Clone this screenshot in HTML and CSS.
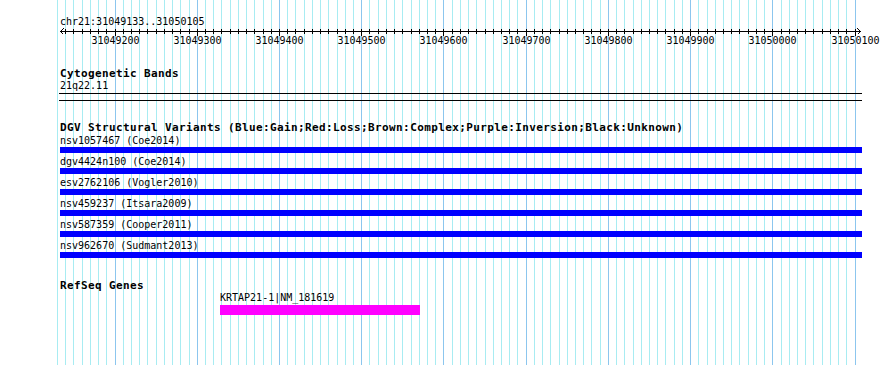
FILE: index.html
```html
<!DOCTYPE html>
<html lang="en">

<head>
    <meta charset="UTF-8">
    <meta name="viewport" content="width=device-width, initial-scale=1.0">
    <title>chr21:31049133..31050105</title>
    <link rel="stylesheet" href="styles.css">
</head>

<body>
    <div id="panel">
        <svg id="grid" width="890" height="365"></svg>
        <div class="label seg-name">chr21:31049133..31050105</div>
        <svg id="ruler" width="890" height="20"></svg>

        <div class="track cyto">
            <div class="track-title">Cytogenetic Bands</div>
            <div class="label">21q22.11</div>
            <div class="band"></div>
        </div>

        <div class="track dgv">
            <div class="track-title">DGV Structural Variants (Blue:Gain;Red:Loss;Brown:Complex;Purple:Inversion;Black:Unknown)</div>
            <div class="feature">
                <div class="label">nsv1057467 (Coe2014)</div>
                <div class="bar gain"></div>
            </div>
            <div class="feature">
                <div class="label">dgv4424n100 (Coe2014)</div>
                <div class="bar gain"></div>
            </div>
            <div class="feature">
                <div class="label">esv2762106 (Vogler2010)</div>
                <div class="bar gain"></div>
            </div>
            <div class="feature">
                <div class="label">nsv459237 (Itsara2009)</div>
                <div class="bar gain"></div>
            </div>
            <div class="feature">
                <div class="label">nsv587359 (Cooper2011)</div>
                <div class="bar gain"></div>
            </div>
            <div class="feature">
                <div class="label">nsv962670 (Sudmant2013)</div>
                <div class="bar gain"></div>
            </div>
        </div>

        <div class="track refseq">
            <div class="track-title">RefSeq Genes</div>
            <div class="feature gene">
                <div class="label">KRTAP21-1|NM_181619</div>
                <div class="bar transcript"></div>
            </div>
        </div>
    </div>
    <script>
        const segStart = 31049133;
        const segEnd = 31050105;
        const padLeft = 60;
        const trackWidth = 800;
        const scale = trackWidth / (segEnd - segStart + 1);
        const NS = 'http://www.w3.org/2000/svg';

        function xpos(bp) {
            return Math.floor(padLeft + (bp - segStart) * scale);
        }

        function addLine(svg, x1, y1, x2, y2, cls) {
            const el = document.createElementNS(NS, 'line');
            el.setAttribute('x1', x1);
            el.setAttribute('y1', y1);
            el.setAttribute('x2', x2);
            el.setAttribute('y2', y2);
            if (cls) el.setAttribute('class', cls);
            svg.appendChild(el);
        }

        // grid lines every 10bp, darker every 100bp
        const grid = document.getElementById('grid');
        for (let bp = 31049130; bp <= segEnd; bp += 10) {
            const x = xpos(bp) + 0.5;
            addLine(grid, x, 0, x, 365, bp % 100 === 0 ? 'major' : '');
        }

        // ruler: axis, arrows, ticks and labels
        const ruler = document.getElementById('ruler');
        addLine(ruler, padLeft, 3.5, padLeft + trackWidth + 1, 3.5);
        const arrows = ['63.5,0.5 60.5,3.5 63.5,6.5', '857.5,0.5 860.5,3.5 857.5,6.5'];
        arrows.forEach(pts => {
            const p = document.createElementNS(NS, 'polyline');
            p.setAttribute('points', pts);
            ruler.appendChild(p);
        });
        for (let bp = 31049140; bp <= segEnd; bp += 10) {
            const x = xpos(bp) + 0.5;
            if (bp % 100 === 0) {
                addLine(ruler, x, 1, x, 8);
                const t = document.createElementNS(NS, 'text');
                t.setAttribute('x', x);
                t.setAttribute('y', 16);
                t.setAttribute('class', 'tick-label');
                t.textContent = bp;
                ruler.appendChild(t);
            } else {
                addLine(ruler, x, 1, x, 6);
            }
        }
    </script>
</body>

</html>
```

FILE: styles.css
```css
body,
html {
    margin: 0;
    padding: 0;
    background: #fff;
}

#panel {
    position: relative;
    z-index: 0;
    width: 890px;
    height: 365px;
    padding-top: 15px;
    box-sizing: border-box;
    overflow: hidden;
    font-family: "DejaVu Sans Mono", monospace;
    color: #000;
}

#grid {
    position: absolute;
    left: 0;
    top: 0;
    z-index: -1;
}

#grid line {
    stroke: #a8ecf2;
    stroke-width: 1;
    shape-rendering: crispEdges;
}

#grid line.major {
    stroke: #8cc6ee;
}

#ruler {
    display: block;
}

#ruler line,
#ruler polyline {
    stroke: #000;
    stroke-width: 1;
    fill: none;
    shape-rendering: crispEdges;
}

#ruler .tick-label {
    font-family: "DejaVu Sans Mono", monospace;
    font-size: 10px;
    text-anchor: middle;
    fill: #000;
}

.label {
    height: 12px;
    padding-left: 60px;
    font-size: 10px;
    line-height: 12px;
    white-space: nowrap;
}

.seg-name {
    height: 13px;
    line-height: 13px;
}

.track-title {
    height: 13px;
    padding-left: 60px;
    font-size: 11px;
    font-weight: bold;
    letter-spacing: 0.38px;
    line-height: 13px;
    white-space: nowrap;
}

.cyto {
    margin-top: 19px;
}

.band {
    margin: 1px 0 0 59px;
    width: 803px;
    height: 8px;
    box-sizing: border-box;
    border-top: 1px solid #000;
    border-bottom: 1px solid #000;
}

.dgv {
    margin-top: 20px;
}

.dgv .track-title {
    margin-bottom: 1px;
}

.feature {
    margin-bottom: 3px;
}

.bar {
    margin-left: 60px;
    width: 802px;
    height: 6px;
}

.bar.gain {
    background: #0000ff;
}

.refseq {
    margin-top: 21px;
}

.gene .label {
    padding-left: 220px;
}

.bar.transcript {
    margin: 1px 0 0 220px;
    width: 200px;
    height: 10px;
    background: #ff00ff;
}
```
